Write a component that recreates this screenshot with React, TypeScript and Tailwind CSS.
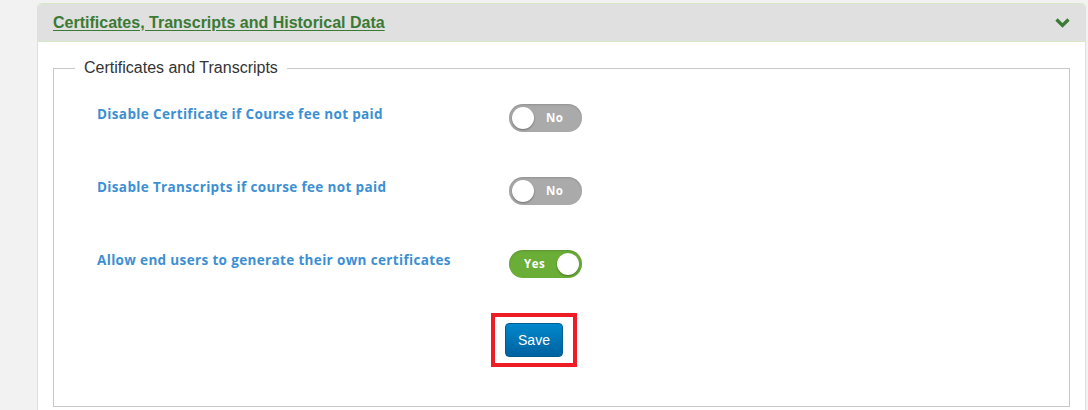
import React from "react";

function Toggle({ on }: { on: boolean }) {
  return on ? (
    <div className="relative w-[73px] h-[28px] rounded-full bg-[#6aae37] flex items-center shadow-[inset_0_1px_2px_rgba(0,0,0,0.15)]">
      <span className="ml-[15px] text-[11.5px] font-bold text-white tracking-[0.5px] font-['Open_Sans',sans-serif]">Yes</span>
      <div className="absolute right-[3px] top-[3px] w-[22px] h-[22px] rounded-full bg-white shadow-[0_1px_2px_rgba(0,0,0,0.35)]" />
    </div>
  ) : (
    <div className="relative w-[73px] h-[28px] rounded-full bg-[#aaaaaa] flex items-center shadow-[inset_0_1px_2px_rgba(0,0,0,0.15)]">
      <span className="ml-[37px] text-[11.5px] font-bold text-white tracking-[0.5px] font-['Open_Sans',sans-serif]">No</span>
      <div className="absolute left-[3px] top-[3px] w-[22px] h-[22px] rounded-full bg-white shadow-[0_1px_2px_rgba(0,0,0,0.35)]" />
    </div>
  );
}

function Row({ label, on }: { label: string; on: boolean }) {
  return (
    <div className="flex items-start h-[73px]">
      <div className="w-[455px] pl-[43px] pt-0 text-[13.5px] font-bold text-[#3d8fd3] font-['Open_Sans',sans-serif] tracking-[0.35px]">
        {label}
      </div>
      <Toggle on={on} />
    </div>
  );
}

export default function App() {
  return (
    <div className="w-[1088px] h-[410px] bg-[#f2f2f2] pt-[3px] pl-[37px] pr-[2px] overflow-hidden font-['Liberation_Sans',Arial,sans-serif]">
      <div className="h-[420px] bg-white border border-[#d6e9c6] rounded-t-[4px]">
        <div className="h-[38px] bg-[#e0e0e0] border-b border-[#d6e9c6] flex items-center justify-between pl-[15px] pr-[15px] rounded-t-[4px]">
          <a className="text-[16px] font-bold text-[#3a7a34] underline underline-offset-2">
            Certificates, Transcripts and Historical Data
          </a>
          <svg width="15" height="11" viewBox="0 0 15 11">
            <path d="M1.5 2.5 L7.5 8.5 L13.5 2.5" fill="none" stroke="#3a7a34" strokeWidth="3.2" strokeLinejoin="miter" />
          </svg>
        </div>
        <div className="pt-[17px] pl-[15px] pr-[15px]">
          <fieldset className="border border-[#c8c8c8] h-[348px] pl-[0px] pr-0">
            <legend className="ml-[21px] px-[9px] text-[16px] text-[#333] leading-[18px]">
              Certificates and Transcripts
            </legend>
            <div className="pt-[27px]">
              <Row label="Disable Certificate if Course fee not paid" on={false} />
              <Row label="Disable Transcripts if course fee not paid" on={false} />
              <Row label="Allow end users to generate their own certificates" on={true} />
            </div>
            <div className="flex justify-center pr-[55px] mt-[-10px]">
              <div className="border-[4px] border-[#ee1c25] px-[10px] py-[6px]">
                <button className="w-[58px] h-[34px] rounded-[4px] bg-gradient-to-b from-[#0088cc] to-[#0062a0] text-white text-[14px] border border-[#005b94]">
                  Save
                </button>
              </div>
            </div>
          </fieldset>
        </div>
      </div>
    </div>
  );
}
